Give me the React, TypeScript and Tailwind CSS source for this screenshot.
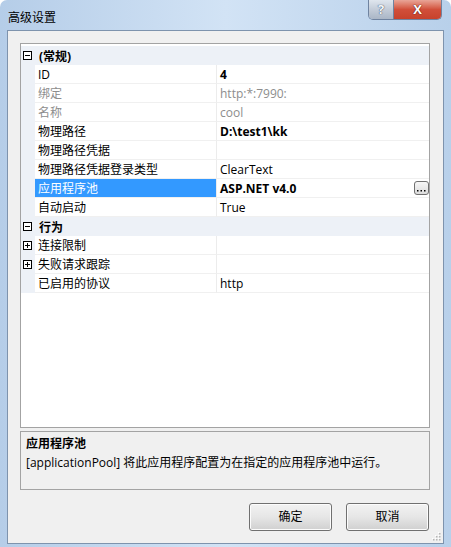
import React from "react";

type Row =
  | { kind: "cat"; label: string }
  | {
      kind: "prop";
      label: string;
      value?: string;
      bold?: boolean;
      gray?: boolean;
      selected?: boolean;
      expand?: boolean;
      dots?: boolean;
    };

const rows: Row[] = [
  { kind: "cat", label: "(常规)" },
  { kind: "prop", label: "ID", value: "4", bold: true },
  { kind: "prop", label: "绑定", value: "http:*:7990:", gray: true },
  { kind: "prop", label: "名称", value: "cool", gray: true },
  { kind: "prop", label: "物理路径", value: "D:\\test1\\kk", bold: true },
  { kind: "prop", label: "物理路径凭据", value: "" },
  { kind: "prop", label: "物理路径凭据登录类型", value: "ClearText" },
  { kind: "prop", label: "应用程序池", value: "ASP.NET v4.0", bold: true, selected: true, dots: true },
  { kind: "prop", label: "自动启动", value: "True" },
  { kind: "cat", label: "行为" },
  { kind: "prop", label: "连接限制", value: "", expand: true },
  { kind: "prop", label: "失败请求跟踪", value: "", expand: true },
  { kind: "prop", label: "已启用的协议", value: "http" },
];

function Box({ plus }: { plus?: boolean }) {
  return (
    <svg width="9" height="9" viewBox="0 0 9 9" className="block">
      <rect x="0.5" y="0.5" width="8" height="8" fill="#ffffff" stroke="#000000" strokeWidth="1" />
      <line x1="2" y1="4.5" x2="7" y2="4.5" stroke="#000000" strokeWidth="1" />
      {plus && <line x1="4.5" y1="2" x2="4.5" y2="7" stroke="#000000" strokeWidth="1" />}
    </svg>
  );
}

export default function App() {
  const font = "font-['Segoe_UI','Open_Sans','Noto_Sans_CJK_SC',sans-serif]";
  return (
    <div className={`w-[451px] h-[547px] overflow-hidden bg-white ${font} text-[12px] text-black`}>
      <div className="relative w-[451px] h-[547px] rounded-t-[7px] bg-gradient-to-r from-[#b5cde8] via-[#d2e3f5] to-[#b8d0ea] flex flex-col px-[7px] pb-[3px]">
        {/* Title bar */}
        <div className="h-[30px] flex items-start justify-between shrink-0">
          <div className="pl-[1px] pt-[10px] text-[12px] leading-[16px] text-black">高级设置</div>
          <div className="mr-[2px] flex h-[20px] rounded-b-[5px] overflow-hidden border border-t-0 border-[#6f83a0]">
            <div className="w-[25px] h-full bg-gradient-to-b from-[#dfe6ee] via-[#c3ccd8] to-[#aab6c6] flex items-center justify-center border-r border-[#6f83a0]">
              <span className="text-[13px] leading-none font-bold text-[#f4f7fb] [text-shadow:0_0_1px_#44546a,0_0_1px_#44546a]">?</span>
            </div>
            <div className="w-[47px] h-full bg-gradient-to-b from-[#e8a597] via-[#d14f3a] to-[#c7422c] flex items-center justify-center">
              <span className="text-[13px] leading-none font-bold text-white [text-shadow:0_0_1px_#5a1408,0_0_1px_#5a1408]">X</span>
            </div>
          </div>
        </div>

        {/* Client area */}
        <div className="relative flex-1 border border-[#7e93ad] bg-[#f0f0f0] flex flex-col pl-[12px] pr-[13px] pt-[12px]">
          {/* Property grid */}
          <div className="w-[410px] h-[385px] border border-[#a3a3a3] bg-white pt-[2px] flex flex-col">
            {rows.map((r, i) =>
              r.kind === "cat" ? (
                <div key={i} className="h-[19px] flex items-center bg-[#edf1f7]">
                  <div className="w-[14px] h-full flex items-center pl-[2px]">
                    <Box />
                  </div>
                  <div className="pl-[4px] font-bold leading-[19px] pt-px">{r.label}</div>
                </div>
              ) : (
                <div key={i} className="h-[19px] flex">
                  <div className="w-[14px] h-full bg-[#edf1f7] flex items-center pl-[2px]">
                    {r.expand && <Box plus />}
                  </div>
                  <div
                    className={`w-[181px] h-full border-b border-[#f0f0f0] pl-[3px] pt-px leading-[18px] whitespace-nowrap ${
                      r.selected ? "bg-[#3399ff] text-white" : r.gray ? "text-[#8d8d8d]" : "text-black"
                    }`}
                  >
                    {r.label}
                  </div>
                  <div
                    className={`flex-1 h-full border-l border-b border-[#ececec] border-b-[#f0f0f0] pl-[3px] leading-[18px] flex items-center justify-between whitespace-nowrap ${
                      r.bold ? "font-bold" : ""
                    } ${r.gray ? "text-[#8d8d8d]" : "text-black"}`}
                  >
                    <span className="pt-px">{r.value}</span>
                    {r.dots && (
                      <div className="w-[15px] h-[14px] rounded-[3px] border border-[#707070] bg-gradient-to-b from-[#f6f6f6] to-[#dcdcdc] flex items-end justify-center pb-[2px] font-normal">
                        <svg width="9" height="2" viewBox="0 0 9 2">
                          <rect x="0" y="0" width="1.5" height="1.5" fill="#000" />
                          <rect x="3.5" y="0" width="1.5" height="1.5" fill="#000" />
                          <rect x="7" y="0" width="1.5" height="1.5" fill="#000" />
                        </svg>
                      </div>
                    )}
                  </div>
                </div>
              )
            )}
          </div>

          {/* Description */}
          <div className="mt-[3px] w-[410px] h-[59px] border border-[#a3a3a3] bg-[#f0f0f0] pl-[5px] pt-[2px]">
            <div className="font-bold leading-[19px]">应用程序池</div>
            <div className="leading-[19px] whitespace-nowrap">[applicationPool] 将此应用程序配置为在指定的应用程序池中运行。</div>
          </div>

          {/* Buttons */}
          <div className="mt-[13px] w-[410px] flex justify-end gap-[14px] pr-[1px]">
            <button className="w-[83px] h-[28px] rounded-[3px] border border-[#707070] bg-gradient-to-b from-[#f2f2f2] via-[#e6e6e6] to-[#d0d0d0] text-[12px] text-black shadow-[inset_0_0_0_1px_#fcfcfc]">
              确定
            </button>
            <button className="w-[83px] h-[28px] rounded-[3px] border border-[#707070] bg-gradient-to-b from-[#f2f2f2] via-[#e6e6e6] to-[#d0d0d0] text-[12px] text-black shadow-[inset_0_0_0_1px_#fcfcfc]">
              取消
            </button>
          </div>

          {/* Resize grip */}
          <svg width="10" height="10" viewBox="0 0 10 10" className="absolute right-[2px] bottom-[2px]">
            {[
              [8, 2],
              [5, 5],
              [8, 5],
              [2, 8],
              [5, 8],
              [8, 8],
            ].map(([x, y], k) => (
              <g key={k}>
                <rect x={x} y={y} width="1.5" height="1.5" fill="#b4b4b4" />
                <rect x={x - 1} y={y - 1} width="1.2" height="1.2" fill="#ffffff" />
              </g>
            ))}
          </svg>
        </div>
      </div>
    </div>
  );
}
